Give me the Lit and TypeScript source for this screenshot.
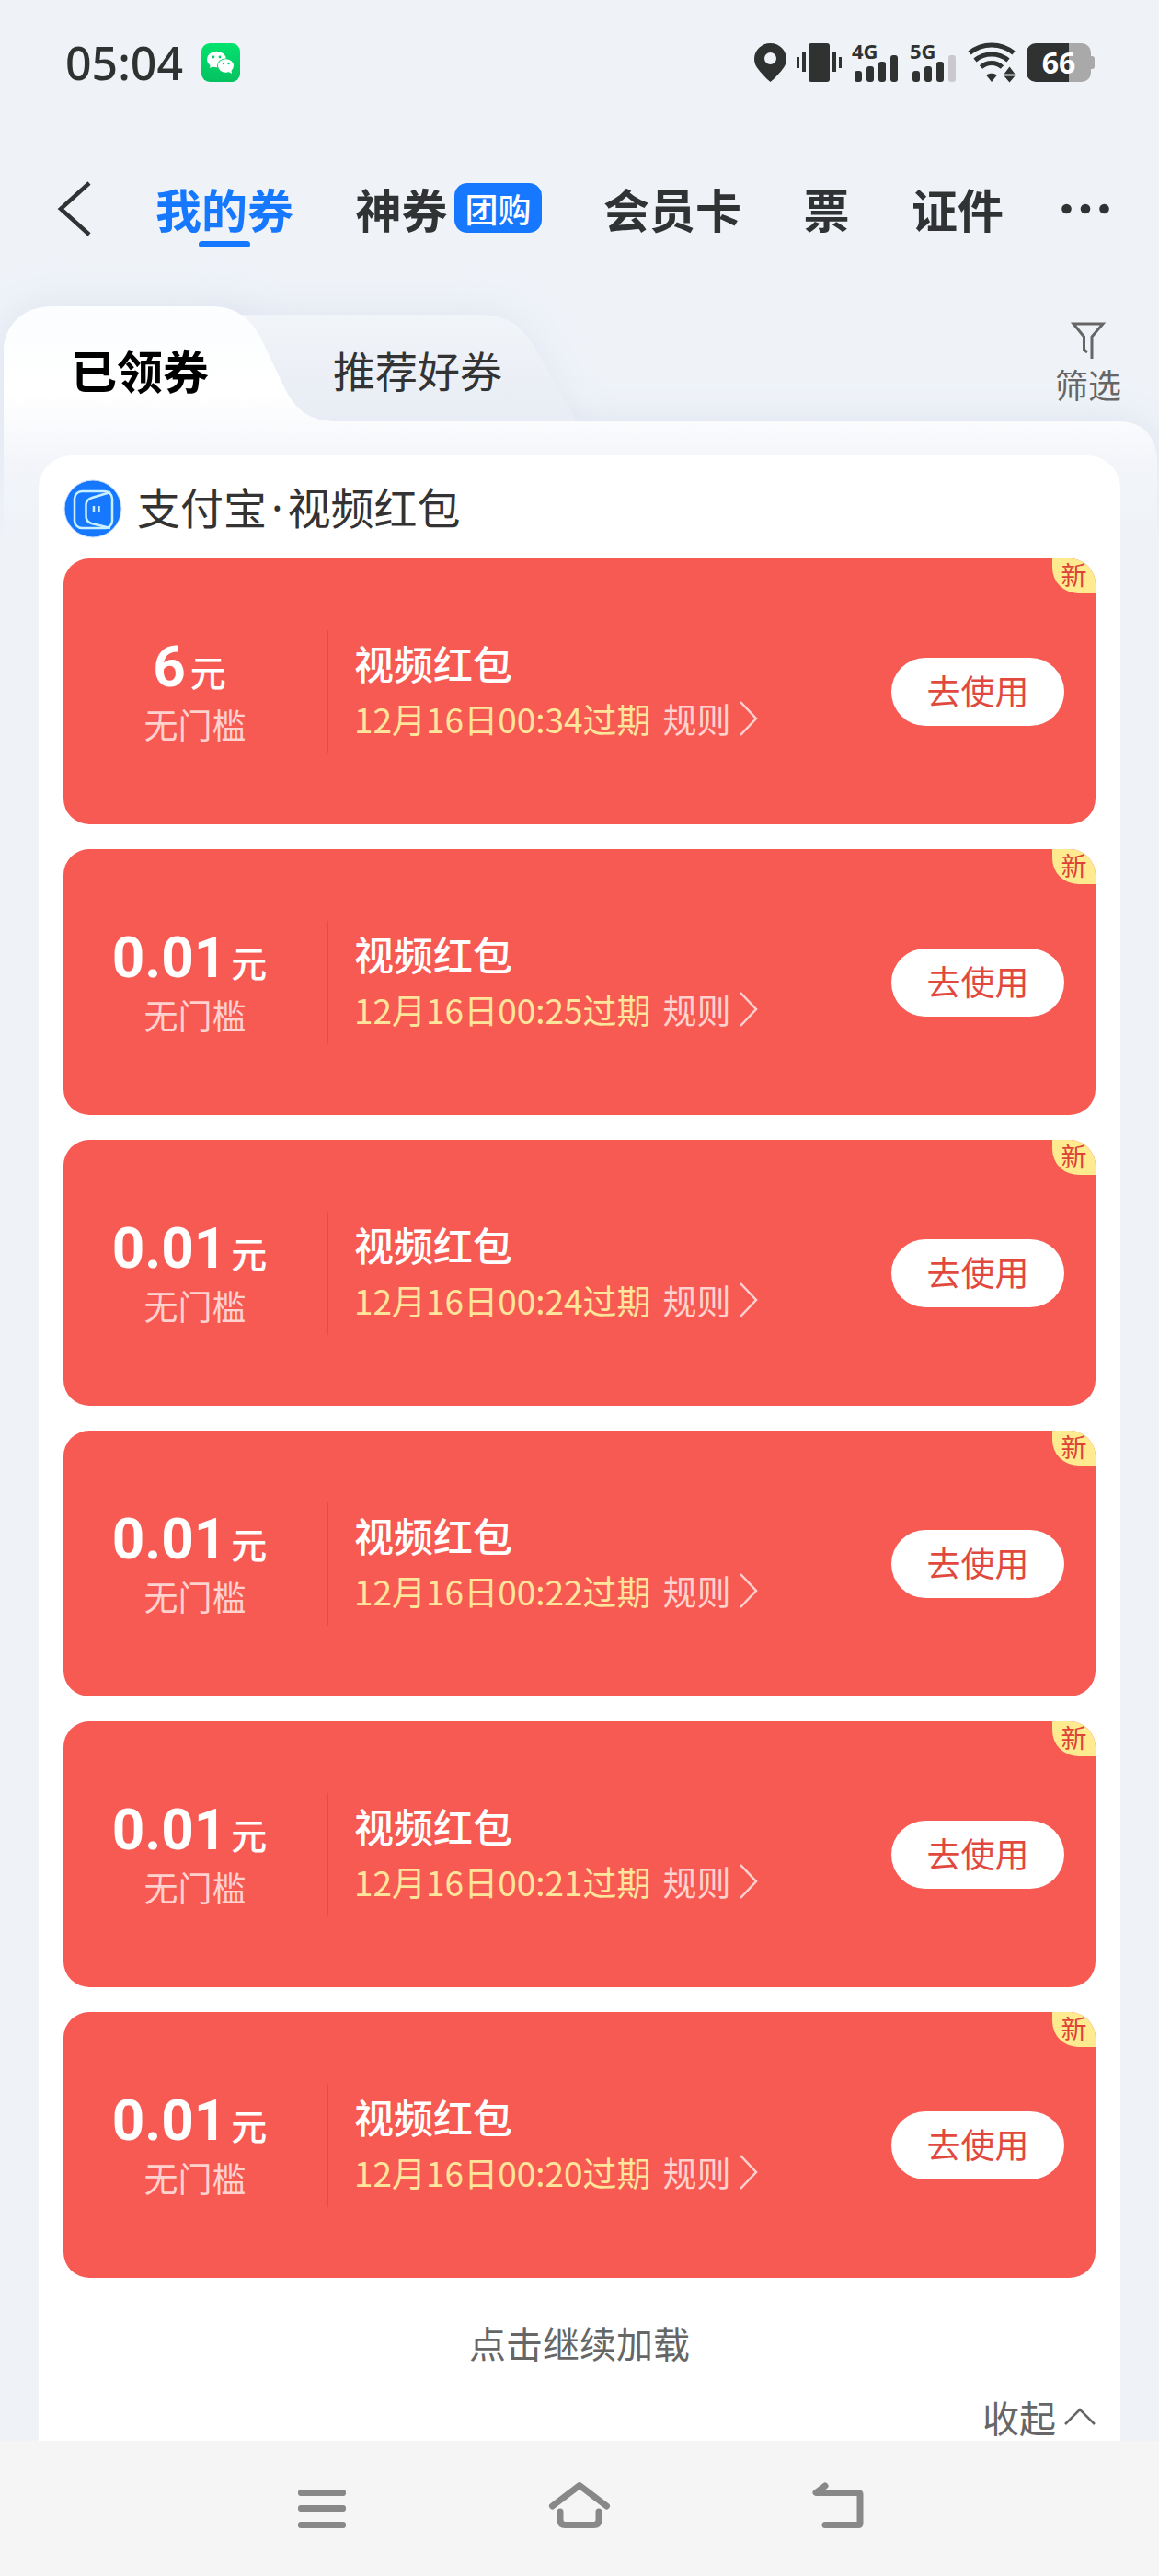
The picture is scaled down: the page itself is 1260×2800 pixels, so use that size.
import { LitElement, html, css, svg } from "lit";
import { customElement, property } from "lit/decorators.js";

interface Coupon {
  amount: string;
  title: string;
  expires: string;
}

const COUPONS: Coupon[] = [
  { amount: "6", title: "视频红包", expires: "12月16日00:34过期" },
  { amount: "0.01", title: "视频红包", expires: "12月16日00:25过期" },
  { amount: "0.01", title: "视频红包", expires: "12月16日00:24过期" },
  { amount: "0.01", title: "视频红包", expires: "12月16日00:22过期" },
  { amount: "0.01", title: "视频红包", expires: "12月16日00:21过期" },
  { amount: "0.01", title: "视频红包", expires: "12月16日00:20过期" },
];

const reset = css`
  *,
  *::before,
  *::after {
    box-sizing: border-box;
  }
  button {
    margin: 0;
    padding: 0;
    border: 0;
    background: none;
    font: inherit;
    color: inherit;
    cursor: pointer;
  }
  a {
    color: inherit;
    text-decoration: none;
  }
  svg {
    display: block;
    flex: none;
    overflow: visible;
  }
`;

/** Four bars of a mobile signal; bars past the level are drawn pale. */
const signalBars = (x: number, level: number) =>
  [12, 17, 22, 29].map(
    (h, i) => svg`<rect x=${x + i * 13} y=${42 - h} width="8" height=${h} rx="3"
      fill=${i < level ? "#303231" : "#c9c9ce"}></rect>`
  );

@customElement("status-bar")
export class StatusBar extends LitElement {
  static styles = [
    reset,
    css`
      :host {
        display: flex;
        align-items: center;
        justify-content: space-between;
        padding: 36px 70px 0 71px;
        height: 100px;
        color: #303231;
      }
      .left {
        display: flex;
        align-items: center;
        gap: 20px;
      }
      .time {
        font: 500 50px/64px "Noto Sans", "Noto Sans CJK SC", sans-serif;
      }
      .right {
        display: flex;
        align-items: center;
        gap: 11px;
      }
      .net {
        font: 700 22px "Noto Sans", sans-serif;
      }
      .level {
        font: 700 32px "Noto Sans", sans-serif;
      }
    `,
  ];

  render() {
    return html`
      <div class="left">
        <span class="time">05:04</span>
        <svg width="42" height="42" viewBox="0 0 42 42" aria-hidden="true">
          <defs>
            <linearGradient id="wx" x1="0" y1="0" x2="0" y2="1">
              <stop offset="0" stop-color="#02e36e"></stop>
              <stop offset="1" stop-color="#05c160"></stop>
            </linearGradient>
          </defs>
          <rect width="42" height="42" rx="9" fill="url(#wx)"></rect>
          <path d="M10 22l-1 5 6-3z" fill="#fff"></path>
          <ellipse cx="16.500" cy="17.500" rx="10.500" ry="8.800" fill="#fff"></ellipse>
          <ellipse cx="26.500" cy="24.500" rx="9.500" ry="8" fill="#04cf66"></ellipse>
          <path d="M28 30l5 3-1-6z" fill="#fff"></path>
          <ellipse cx="26.500" cy="24.500" rx="8.500" ry="7.300" fill="#fff"></ellipse>
          <g fill="#04cf66">
            <circle cx="13" cy="15" r="1.400"></circle>
            <circle cx="20" cy="15" r="1.400"></circle>
            <circle cx="24" cy="22" r="1.200"></circle>
            <circle cx="29.500" cy="22" r="1.200"></circle>
          </g>
        </svg>
      </div>
      <div class="right">
        <svg width="35" height="42" viewBox="0 0 35 42" fill="#303231" aria-hidden="true">
          <path fill-rule="evenodd" d="M17.500 0C7.800 0 0 7.700 0 17c0 4 1.200 6.800 3 9.500C7 32 12.500 38 17.500 42 22.500 38 28 32 32 26.500c1.800-2.700 3-5.500 3-9.500C35 7.700 27.200 0 17.500 0zm0 10a6.500 6.500 0 1 1 0 13 6.500 6.500 0 0 1 0-13z"></path>
        </svg>
        <svg width="49" height="42" viewBox="0 0 49 42" fill="#303231" aria-hidden="true">
          <rect x="13" width="23" height="42" rx="3"></rect>
          <rect x="0" y="15" width="3" height="12"></rect>
          <rect x="6" y="10" width="4" height="21"></rect>
          <rect x="39" y="10" width="4" height="21"></rect>
          <rect x="46" y="15" width="3" height="12"></rect>
        </svg>
        <svg width="52" height="42" viewBox="0 0 52 42" aria-hidden="true">
          <text class="net" x="0" y="17" fill="#303231">4G</text>
          ${signalBars(3, 4)}
        </svg>
        <svg width="52" height="42" viewBox="0 0 52 42" aria-hidden="true">
          <text class="net" x="0" y="17" fill="#303231">5G</text>
          ${signalBars(3, 3)}
        </svg>
        <svg width="53" height="42" viewBox="0 0 53 42" aria-hidden="true">
          <g fill="none" stroke="#303231" stroke-width="5">
            <path d="M2 10.500a38 38 0 0 1 48 0"></path>
            <path d="M8 18.500a28 28 0 0 1 36 0"></path>
            <path d="M14.500 26a17 17 0 0 1 23 0"></path>
          </g>
          <path d="M20 34.500c4-2.500 8-2.500 12 0L26 42z" fill="#303231"></path>
          <path d="M39.500 33.500l6-8 6 8zM39.500 35.500h12l-6 7z" fill="#303231"></path>
        </svg>
        <svg width="74" height="42" viewBox="0 0 74 42" aria-hidden="true">
          <path d="M10 0h36v42H10A10 10 0 0 1 0 32V10A10 10 0 0 1 10 0z" fill="#303231"></path>
          <path d="M46 0h14a10 10 0 0 1 10 10v4h1a3 3 0 0 1 3 3v8a3 3 0 0 1-3 3h-1v4a10 10 0 0 1-10 10H46z" fill="#a9a9aa"></path>
          <text class="level" x="35" y="33" text-anchor="middle" fill="#fff">66</text>
        </svg>
      </div>
    `;
  }
}

@customElement("wallet-nav")
export class WalletNav extends LitElement {
  static styles = [
    reset,
    css`
      :host {
        display: flex;
        align-items: center;
        justify-content: space-between;
        height: 210px;
        padding: 44px 54px 0 62px;
        color: #303233;
        font-size: 50px;
        font-weight: 700;
        line-height: 60px;
      }
      nav {
        display: flex;
        flex: 1;
        align-items: center;
        justify-content: space-between;
        padding: 0 63px 0 69px;
      }
      .link {
        display: flex;
        align-items: center;
        position: relative;
        padding-bottom: 2px;
      }
      .active {
        color: #1677ff;
      }
      .active::after {
        content: "";
        position: absolute;
        left: 50%;
        bottom: -11px;
        width: 56px;
        height: 7px;
        margin-left: -28px;
        border-radius: 4px;
        background: #1677ff;
      }
      .badge {
        margin-left: 8px;
        padding: 0 11px;
        border-radius: 14px;
        background: #1677ff;
        color: #fff;
        font-size: 36px;
        font-weight: 500;
        line-height: 54px;
      }
    `,
  ];

  render() {
    return html`
      <button aria-label="返回">
        <svg width="38" height="58" viewBox="0 0 38 58" fill="none" stroke="#303233" stroke-width="4.500">
          <path d="M35 1L4 29l31 28"></path>
        </svg>
      </button>
      <nav>
        <a class="link active" href="#coupons">我的券</a>
        <a class="link" href="#deals">神券<span class="badge">团购</span></a>
        <a class="link" href="#cards">会员卡</a>
        <a class="link" href="#tickets">票</a>
        <a class="link" href="#ids">证件</a>
      </nav>
      <button aria-label="更多">
        <svg width="52" height="12" viewBox="0 0 52 12" fill="#303233">
          <circle cx="5.500" cy="6" r="5.300"></circle>
          <circle cx="26" cy="6" r="5.300"></circle>
          <circle cx="46.500" cy="6" r="5.300"></circle>
        </svg>
      </button>
    `;
  }
}

@customElement("coupon-tabs")
export class CouponTabs extends LitElement {
  static styles = [
    reset,
    css`
      :host {
        display: flex;
        position: relative;
        align-items: center;
        height: 185px;
        padding: 0 41px 0 77px;
      }
      .shape {
        position: absolute;
        left: 0;
        top: -40px;
        width: 100%;
        height: 320px;
      }
      .tab {
        position: relative;
        margin-bottom: 4px;
        font-size: 46px;
        line-height: 60px;
        color: #333;
      }
      .current {
        margin-right: 135px;
        font-size: 50px;
        font-weight: 700;
        color: #000;
      }
      .filter {
        position: relative;
        display: flex;
        flex-direction: column;
        align-items: center;
        gap: 5px;
        margin-left: auto;
        margin-bottom: 16px;
        font-size: 36px;
        line-height: 44px;
        color: #666;
      }
    `,
  ];

  render() {
    return html`
      <svg class="shape" viewBox="0 0 1260 320" preserveAspectRatio="none" aria-hidden="true">
        <defs>
          <linearGradient id="front" gradientUnits="userSpaceOnUse" x1="0" y1="63" x2="0" y2="300">
            <stop offset="0" stop-color="#fbfdfe"></stop>
            <stop offset="0.400" stop-color="#ffffff"></stop>
            <stop offset="0.720" stop-color="#f3f5fa"></stop>
            <stop offset="1" stop-color="#eff3f8"></stop>
          </linearGradient>
          <linearGradient id="back" x1="0" y1="0" x2="0" y2="1">
            <stop offset="0" stop-color="#f1f4f8"></stop>
            <stop offset="1" stop-color="#e8ecf4"></stop>
          </linearGradient>
          <linearGradient id="fade" gradientUnits="userSpaceOnUse" x1="0" y1="200" x2="0" y2="320">
            <stop offset="0" stop-color="#fff"></stop>
            <stop offset="1" stop-color="#000"></stop>
          </linearGradient>
          <mask id="soft" maskUnits="userSpaceOnUse" x="-40" y="-40" width="1340" height="360">
            <rect x="-40" y="-40" width="1340" height="360" fill="url(#fade)"></rect>
          </mask>
          <filter id="glow" x="-20%" y="-40%" width="140%" height="180%">
            <feGaussianBlur stdDeviation="20"></feGaussianBlur>
          </filter>
        </defs>
        <g mask="url(#soft)">
          <path d="M230 72H520C556 72 570 94 581 112L627 200V320H230z" fill="#dfe3f0" filter="url(#glow)"></path>
          <path d="M4 320V112C4 83 26 63 56 63H228C254 63 270 73 283 96L308 149C322 178 338 188 368 188H1216C1242 188 1256 204 1258 228V320z" fill="#dde2ef" filter="url(#glow)"></path>
        </g>
        <path d="M230 72H520C548 72 564 80 581 107L627 188H300z" fill="url(#back)"></path>
        <path d="M4 320V112C4 83 26 63 56 63H228C254 63 270 73 283 96L308 149C322 178 338 188 368 188H1216C1242 188 1256 204 1258 228V320z" fill="url(#front)"></path>
      </svg>
      <button class="tab current">已领券</button>
      <button class="tab">推荐好券</button>
      <button class="filter">
        <svg width="36" height="40" viewBox="0 0 36 40" fill="none" stroke="#666" stroke-width="3">
          <path d="M17 33l-3.500-3V16L2 2h32L22 16v24"></path>
        </svg>
        筛选
      </button>
    `;
  }
}

@customElement("coupon-card")
export class CouponCard extends LitElement {
  @property({ attribute: false }) coupon!: Coupon;

  static styles = [
    reset,
    css`
      :host {
        display: flex;
        position: relative;
        align-items: center;
        height: 289px;
        padding-right: 34px;
        border-radius: 28px;
        background: #f75a53;
        color: #fff;
      }
      .value {
        width: 286px;
        flex: none;
        padding-top: 6px;
        text-align: center;
      }
      .amount {
        display: flex;
        align-items: baseline;
        justify-content: center;
        gap: 5px;
        padding-right: 12px;
        line-height: 60px;
      }
      .number {
        font-family: Roboto, sans-serif;
        font-size: 62px;
        font-weight: 700;
      }
      .unit {
        font-size: 39px;
        font-weight: 500;
      }
      .limit {
        font-size: 37px;
        line-height: 56px;
        color: #ffd2cf;
      }
      .rule {
        width: 2px;
        height: 134px;
        flex: none;
        margin-right: 28px;
        background: #e64c46;
      }
      .info {
        flex: 1;
        padding-bottom: 2px;
      }
      .title {
        font-size: 43px;
        font-weight: 500;
        line-height: 60px;
      }
      .meta {
        display: flex;
        align-items: center;
        gap: 13px;
        font-size: 37px;
        line-height: 62px;
      }
      .expires {
        color: #ffe59c;
      }
      .terms {
        display: flex;
        align-items: center;
        gap: 9px;
        color: #ffd2cf;
      }
      .use {
        width: 188px;
        padding-bottom: 4px;
        border-radius: 38px;
        background: #fff;
        color: #e1493f;
        font-size: 37px;
        line-height: 70px;
      }
      .new {
        position: absolute;
        top: 0;
        right: 0;
        width: 47px;
        height: 38px;
        border-radius: 0 28px 0 28px;
        background: #ffeb8f;
        color: #dd4238;
        font-size: 28px;
        line-height: 34px;
        text-align: center;
      }
    `,
  ];

  render() {
    const { amount, title, expires } = this.coupon;
    return html`
      <div class="value">
        <div class="amount"><span class="number">${amount}</span><span class="unit">元</span></div>
        <div class="limit">无门槛</div>
      </div>
      <div class="rule"></div>
      <div class="info">
        <div class="title">${title}</div>
        <div class="meta">
          <span class="expires">${expires}</span>
          <a class="terms" href="#rules">
            规则
            <svg width="20" height="38" viewBox="0 0 20 38" fill="none" stroke="#ffd2cf" stroke-width="2.500">
              <path d="M1 1l17 18L1 37"></path>
            </svg>
          </a>
        </div>
      </div>
      <button class="use">去使用</button>
      <span class="new">新</span>
    `;
  }
}

@customElement("system-nav")
export class SystemNav extends LitElement {
  static styles = [
    reset,
    css`
      :host {
        display: flex;
        align-items: center;
        justify-content: center;
        gap: 220px;
        height: 147px;
        padding-bottom: 7px;
        background: #f5f5f5;
      }
    `,
  ];

  render() {
    return html`
      <button aria-label="最近任务">
        <svg width="56" height="50" viewBox="0 0 56 50" fill="#888">
          <rect x="3" y="8" width="52" height="7" rx="3"></rect>
          <rect x="3" y="25" width="52" height="7" rx="3"></rect>
          <rect x="3" y="43" width="52" height="7" rx="3"></rect>
        </svg>
      </button>
      <button aria-label="主屏幕">
        <svg width="66" height="50" viewBox="0 0 66 50" fill="none" stroke="#888" stroke-width="7" stroke-linecap="round" stroke-linejoin="round">
          <path d="M3.500 26L33 3.500 62.500 26"></path>
          <path d="M12 32v9q0 5.500 5.500 5.500h31q5.500 0 5.500-5.500v-9"></path>
        </svg>
      </button>
      <button aria-label="返回">
        <svg width="56" height="50" viewBox="0 0 56 50" fill="none" stroke="#888" stroke-width="7" stroke-linecap="round" stroke-linejoin="round">
          <path d="M14 4L4 11.500h46q2 0 2 2V44.500q0 2-2 2H14"></path>
        </svg>
      </button>
    `;
  }
}

@customElement("app-root")
export class AppRoot extends LitElement {
  static styles = [
    reset,
    css`
      :host {
        display: flex;
        flex-direction: column;
        min-height: 100vh;
        background: #eff3f8;
        overflow: hidden;
        font-family: "Noto Sans CJK SC", sans-serif;
        color: #333;
      }
      .panel {
        position: relative;
        flex: 1;
        margin: 0 42px;
        padding: 22px 27px 0;
        border-radius: 36px 36px 0 0;
        background: #fff;
      }
      .brand {
        display: flex;
        align-items: center;
        gap: 16px;
        height: 90px;
        padding-bottom: 18px;
        margin: 0;
        font-size: 47px;
        font-weight: 400;
        line-height: 64px;
      }
      .name {
        padding-bottom: 4px;
      }
      .dot {
        padding: 0 5px;
        font-family: "Noto Sans", sans-serif;
      }
      .list {
        display: flex;
        flex-direction: column;
        gap: 27px;
      }
      .more {
        display: block;
        width: 100%;
        margin-top: 40px;
        font-size: 40px;
        line-height: 60px;
        color: #666;
      }
      .fold {
        display: flex;
        align-items: center;
        gap: 9px;
        margin: 28px 0 0 auto;
        padding-bottom: 3px;
        font-size: 40px;
        line-height: 46px;
        color: #666;
      }
    `,
  ];

  render() {
    return html`
      <status-bar></status-bar>
      <wallet-nav></wallet-nav>
      <coupon-tabs></coupon-tabs>
      <main class="panel">
        <h2 class="brand">
          <svg width="64" height="64" viewBox="0 0 64 64" fill="none" aria-hidden="true">
            <circle cx="32" cy="32" r="31" fill="#1677ff" stroke="#cfe3ff" stroke-width="1"></circle>
            <g stroke="#c9f0ff" stroke-width="2.500" stroke-linejoin="round">
              <rect x="12" y="13" width="41" height="40" rx="8"></rect>
              <path d="M51 14L31 20q-6.500 2-6.500 8v12q0 6 6 8L51 53"></path>
              <path d="M33 29v7M38.500 29v7"></path>
            </g>
          </svg>
          <span class="name">支付宝<span class="dot">·</span>视频红包</span>
        </h2>
        <div class="list">
          ${COUPONS.map((c) => html`<coupon-card .coupon=${c}></coupon-card>`)}
        </div>
        <button class="more">点击继续加载</button>
        <button class="fold">
          收起
          <svg width="34" height="20" viewBox="0 0 34 20" fill="none" stroke="#666" stroke-width="2.500">
            <path d="M1 18L17 2l16 16"></path>
          </svg>
        </button>
      </main>
      <system-nav></system-nav>
    `;
  }
}
